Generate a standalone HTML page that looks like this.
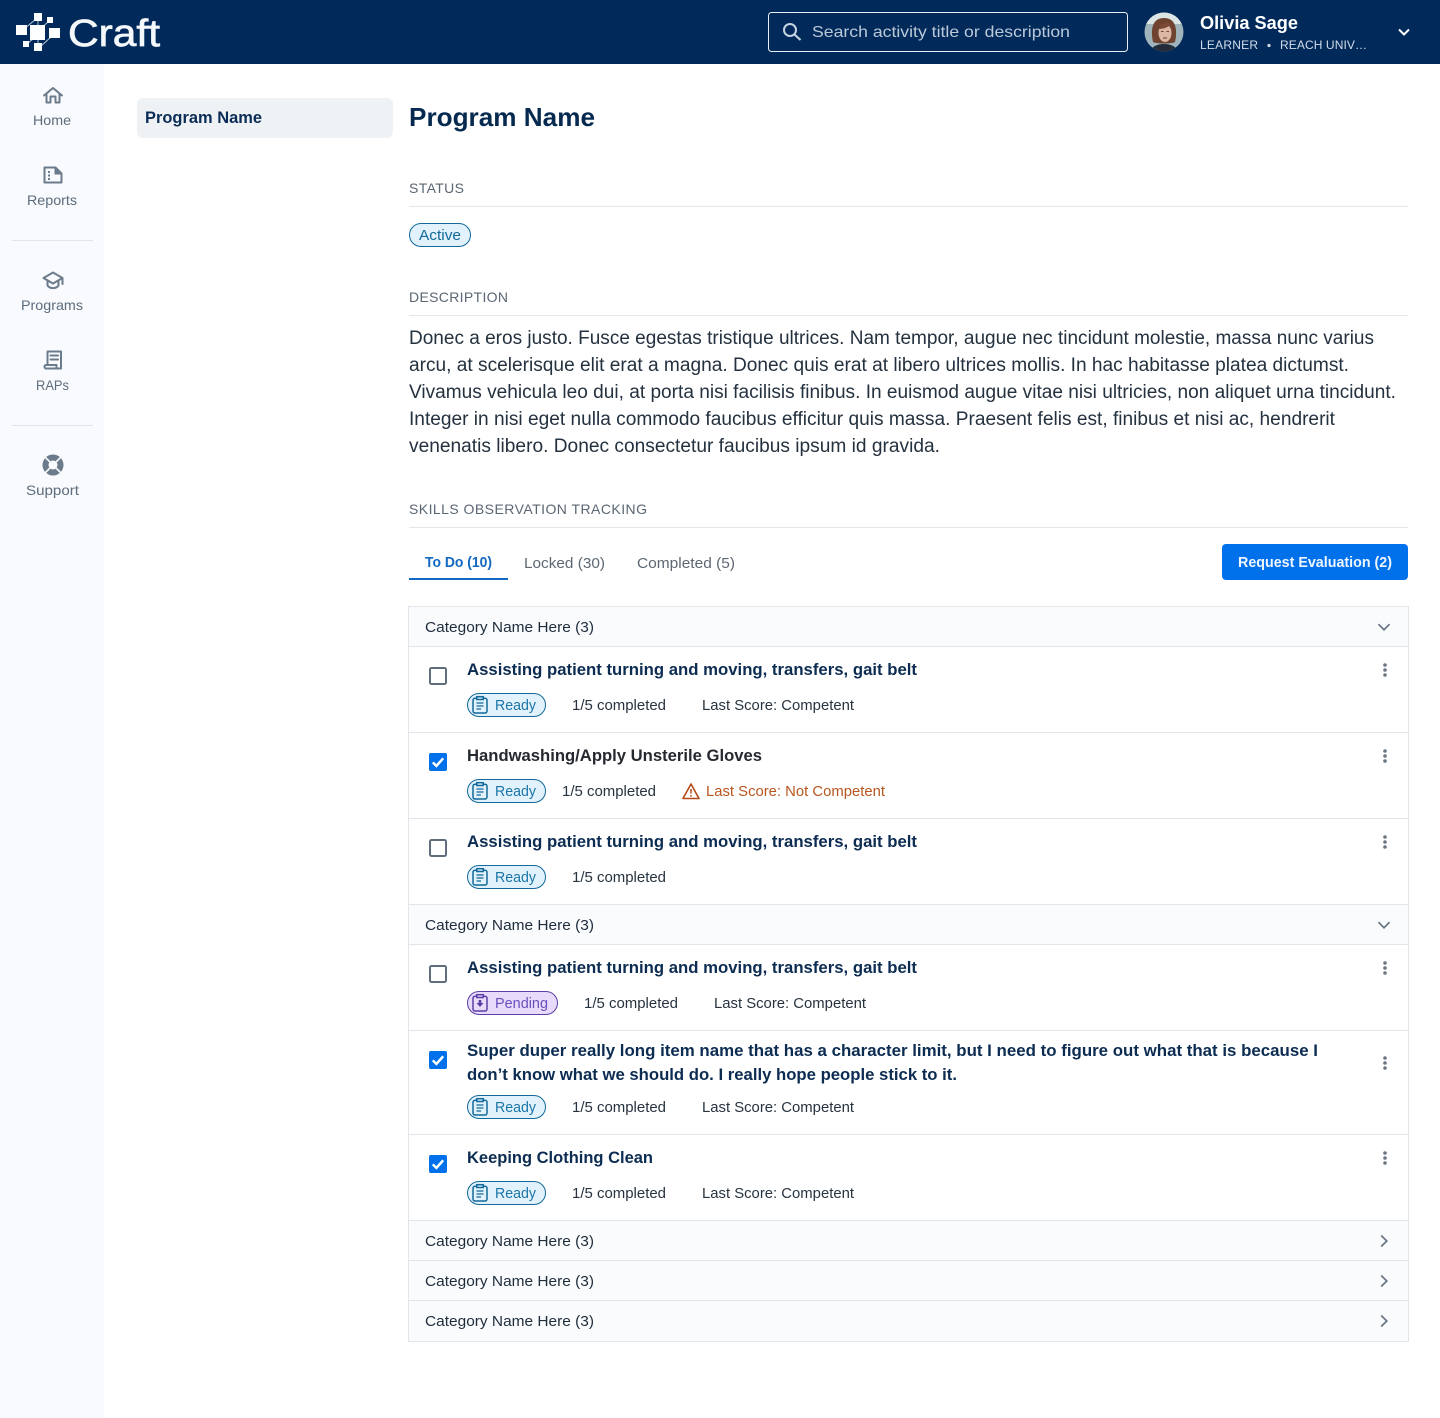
<!DOCTYPE html>
<html lang="en">
<head>
<meta charset="utf-8">
<title>Craft - Program Name</title>
<style>
html,body{margin:0;padding:0;background:#fff}
svg{display:block}
text{font-family:"Liberation Sans",sans-serif;white-space:pre}
.nav{font-size:14px;fill:#5d6c7d;text-anchor:start}
.lab{font-size:14px;fill:#5a6673}
.p{font-size:19px;fill:#24313f}
.t{font-size:16.5px;font-weight:700;fill:#0c2c52}
.c{font-size:15px;fill:#1e2c3c}
.s{font-size:15px;fill:#27333f}
.r{font-size:15px;fill:#1a75a8}
.i{fill:none;stroke:#6c7b8b;stroke-width:2;stroke-linejoin:round;stroke-linecap:round}
</style>
</head>
<body>
<svg xmlns="http://www.w3.org/2000/svg" width="1440" height="1418" viewBox="0 0 1440 1418">
<defs>
<clipPath id="av"><circle cx="1164" cy="32" r="19.5"/></clipPath>
<g id="ready">
<rect x=".5" y=".5" width="78" height="23" rx="11.5" fill="#e2f2fc" stroke="#12699a"/>
<g fill="none" stroke="#12699a" stroke-width="1.5">
<rect x="6" y="5.2" width="14" height="14.8" rx="2"/>
<rect x="9.8" y="3.7" width="6.4" height="2.8" fill="#e2f2fc"/>
<path d="M9.5 10h7M9.5 13h7M9.5 16h4.5" stroke-width="1.3"/>
</g>
</g>
<g id="pending">
<rect x=".5" y=".5" width="90" height="23" rx="11.5" fill="#e7dafa" stroke="#5b3fa6"/>
<g fill="none" stroke="#5b3fa6" stroke-width="1.5">
<rect x="6" y="5.2" width="14" height="14.8" rx="2"/>
<rect x="9.8" y="3.7" width="6.4" height="2.8" fill="#e7dafa"/>
</g>
<path d="M11.7 9h2.6v3h2.2l-3.5 4-3.5-4h2.2z" fill="#5b3fa6"/>
</g>
<g id="box"><rect x="1" y="1" width="16" height="16" rx="1.5" fill="#fff" stroke="#5f6d7d" stroke-width="2"/></g>
<g id="chk"><rect width="18" height="18" rx="2" fill="#0070eb"/><path d="M3.8 9.4l3.6 3.5 6.8-7.6" fill="none" stroke="#fff" stroke-width="2.5"/></g>
<g id="dots" fill="#6c7683"><circle cx="0" cy="-5" r="1.8"/><circle cx="0" cy="0" r="1.8"/><circle cx="0" cy="5" r="1.8"/></g>
<path id="cd" d="M-5.5 -2.8L0 2.8L5.5 -2.8" fill="none" stroke="#66727f" stroke-width="1.7"/>
<path id="cr" d="M-2.8 -5.5L2.8 0L-2.8 5.5" fill="none" stroke="#66727f" stroke-width="1.7"/>
</defs>

<!-- Header -->
<rect width="1440" height="64" fill="#012a5b"/>
<g stroke="#b8c8da" stroke-width="1" fill="none"><path d="M36 19L24 29M48 22L40 29M27 44L34 38M40 47L52 36M38 20V26M38 39V44"/></g>
<g fill="#fdfeff">
<rect x="30" y="25" width="15" height="15"/>
<rect x="16" y="25" width="11" height="10"/>
<rect x="49" y="28" width="11" height="10"/>
<rect x="34" y="13" width="8" height="8"/>
<rect x="47" y="17" width="6" height="6"/>
<rect x="23" y="41" width="6" height="6"/>
<rect x="34" y="43" width="8" height="8"/>
</g>
<text x="68" y="46" font-size="38" fill="#f4f8fb" stroke="#f4f8fb" stroke-width=".7" textLength="92" lengthAdjust="spacingAndGlyphs">Craft</text>

<rect x="768.5" y="12.5" width="359" height="39" rx="3" fill="#012a5b" stroke="#e8eef5"/>
<circle cx="790" cy="30" r="6" fill="none" stroke="#c6d2e0" stroke-width="2"/>
<path d="M794.5 34.5L800.5 40" stroke="#c6d2e0" stroke-width="2.2"/>
<text x="812" y="37" font-size="16" fill="#bcc9d9" textLength="258" lengthAdjust="spacingAndGlyphs">Search activity title or description</text>

<g clip-path="url(#av)">
<rect x="1144" y="12" width="40" height="40" fill="#9fb4bb"/>
<path d="M1144 12h40v12h-40z" fill="#dce5e5"/>
<path d="M1153 42c-3-14 0-24 11-24s14 10 11 24c-3 2-19 2-22 0z" fill="#6f4330"/>
<ellipse cx="1165" cy="33" rx="6.5" ry="9" fill="#dcb7a3"/>
<path d="M1158.5 29c1-5 6-7 12-5.5l-2 3c-4 2-7 2.500-10 2.500z" fill="#7b4a34"/>
<path d="M1161 31.500h2.500M1166.500 31.500h2.500M1163 38h4" stroke="#6b4436" stroke-width="1"/>
<path d="M1149 54c1-7 8-10 15-10s14 3 15 10z" fill="#232c38"/>
</g>

<text x="1200" y="29" font-size="18" font-weight="700" fill="#fff" textLength="98" lengthAdjust="spacingAndGlyphs">Olivia Sage</text>
<text x="1200" y="49" font-size="12" fill="#d3dde9" textLength="58" lengthAdjust="spacing">LEARNER</text>
<circle cx="1269" cy="45.5" r="1.6" fill="#d3dde9"/>
<text x="1280" y="49" font-size="12" fill="#d3dde9" textLength="87" lengthAdjust="spacing">REACH UNIV…</text>
<path d="M1399 29.5L1404 34.5L1409 29.5" fill="none" stroke="#fff" stroke-width="2"/>

<!-- Side navigation -->
<rect x="0" y="64" width="104" height="1354" fill="#f8fafd"/>
<path class="i" d="M44 95.5L53 88L62 95.5M46.5 94V102.5H50.5V96.5H55.5V102.5H59.5V94"/>
<text class="nav" x="33" y="125" textLength="38" lengthAdjust="spacingAndGlyphs">Home</text>
<path class="i" d="M44.500 167.500H55.500L61.500 173.500V182.500H44.500Z"/>
<path d="M55 167.500V174H61.500Z" fill="#6c7b8b" stroke="#6c7b8b" stroke-linejoin="round"/>
<path d="M49 171v2M49 174.500v2M49 178v2" stroke="#6c7b8b" stroke-width="2"/>
<text class="nav" x="27" y="205" textLength="50" lengthAdjust="spacingAndGlyphs">Reports</text>
<rect x="12" y="240" width="81" height="1" fill="#e1e5ea"/>
<path class="i" d="M43.5 278L53 272.5L62.5 278L53 283.5Z M47.5 281V285.5C50 289 56 289 58.5 285.5V281 M62.5 278V284"/>
<text class="nav" x="21" y="310" textLength="62" lengthAdjust="spacingAndGlyphs">Programs</text>
<path class="i" d="M47.5 365V351.500H61V368.500H46C44 368.500 44 365 46 365H56.5V368.500 M50.5 355.500H58M50.5 359.500H58"/>
<text class="nav" x="36" y="390" textLength="33" lengthAdjust="spacingAndGlyphs">RAPs</text>
<rect x="12" y="425" width="81" height="1" fill="#e1e5ea"/>
<circle cx="53" cy="465" r="10.500" fill="#6c7b8b"/>
<circle cx="53" cy="465" r="4.500" fill="#f8fafd"/>
<path d="M45.500 457.500L50 462M60.500 457.500L56 462M45.500 472.500L50 468M60.500 472.500L56 468" stroke="#f8fafd" stroke-width="1.600"/>
<text class="nav" x="26" y="495" textLength="53" lengthAdjust="spacingAndGlyphs">Support</text>

<!-- Left panel -->
<rect x="137" y="98" width="256" height="40" rx="6" fill="#eff2f5"/>
<text x="145" y="123" font-size="17" font-weight="700" fill="#0a2c55" textLength="117" lengthAdjust="spacingAndGlyphs">Program Name</text>

<!-- Main heading -->
<text x="409" y="126" font-size="26" font-weight="700" fill="#06294f" textLength="186" lengthAdjust="spacingAndGlyphs">Program Name</text>

<text class="lab" x="409" y="193" textLength="55" lengthAdjust="spacing">STATUS</text>
<rect x="409" y="206" width="999" height="1" fill="#e3e6ea"/>
<rect x="409.5" y="223.5" width="61" height="23" rx="11.5" fill="#e2f2fc" stroke="#12699a"/>
<text x="419" y="240" font-size="14.5" fill="#13699a" textLength="42" lengthAdjust="spacingAndGlyphs">Active</text>

<text class="lab" x="409" y="302" textLength="99" lengthAdjust="spacing">DESCRIPTION</text>
<rect x="409" y="315" width="999" height="1" fill="#e3e6ea"/>
<text class="p" x="409" y="344" textLength="965" lengthAdjust="spacingAndGlyphs">Donec a eros justo. Fusce egestas tristique ultrices. Nam tempor, augue nec tincidunt molestie, massa nunc varius</text>
<text class="p" x="409" y="371" textLength="940" lengthAdjust="spacingAndGlyphs">arcu, at scelerisque elit erat a magna. Donec quis erat at libero ultrices mollis. In hac habitasse platea dictumst.</text>
<text class="p" x="409" y="398" textLength="987" lengthAdjust="spacingAndGlyphs">Vivamus vehicula leo dui, at porta nisi facilisis finibus. In euismod augue vitae nisi ultricies, non aliquet urna tincidunt.</text>
<text class="p" x="409" y="425" textLength="926" lengthAdjust="spacingAndGlyphs">Integer in nisi eget nulla commodo faucibus efficitur quis massa. Praesent felis est, finibus et nisi ac, hendrerit</text>
<text class="p" x="409" y="452" textLength="531" lengthAdjust="spacingAndGlyphs">venenatis libero. Donec consectetur faucibus ipsum id gravida.</text>

<text class="lab" x="409" y="514" textLength="238" lengthAdjust="spacing">SKILLS OBSERVATION TRACKING</text>
<rect x="409" y="527" width="999" height="1" fill="#e3e6ea"/>

<!-- Tabs -->
<text x="425" y="567" font-size="14.5" font-weight="700" fill="#1268c2" textLength="67" lengthAdjust="spacingAndGlyphs">To Do (10)</text>
<rect x="409" y="578" width="99" height="2" fill="#1268c2"/>
<text x="524" y="568" font-size="15" fill="#5d6873" textLength="81" lengthAdjust="spacingAndGlyphs">Locked (30)</text>
<text x="637" y="568" font-size="15" fill="#5d6873" textLength="98" lengthAdjust="spacingAndGlyphs">Completed (5)</text>
<rect x="1222" y="544" width="186" height="36" rx="4" fill="#0070eb"/>
<text x="1238" y="567" font-size="14.5" font-weight="700" fill="#eef6fe" textLength="154" lengthAdjust="spacingAndGlyphs">Request Evaluation (2)</text>

<!-- Table -->
<g fill="#f9fbfd">
<rect x="409" y="607" width="999" height="39"/>
<rect x="409" y="905" width="999" height="39"/>
<rect x="409" y="1221" width="999" height="120"/>
</g>
<rect x="408.5" y="606.5" width="1000" height="735" fill="none" stroke="#e2e5e9"/>
<g fill="#e2e5e9">
<rect x="409" y="646" width="999" height="1"/>
<rect x="409" y="732" width="999" height="1"/>
<rect x="409" y="818" width="999" height="1"/>
<rect x="409" y="904" width="999" height="1"/>
<rect x="409" y="944" width="999" height="1"/>
<rect x="409" y="1030" width="999" height="1"/>
<rect x="409" y="1134" width="999" height="1"/>
<rect x="409" y="1220" width="999" height="1"/>
<rect x="409" y="1260" width="999" height="1"/>
<rect x="409" y="1300" width="999" height="1"/>
</g>

<text class="c" x="425" y="632" textLength="169" lengthAdjust="spacingAndGlyphs">Category Name Here (3)</text>
<use href="#cd" x="1384" y="627"/>
<text class="c" x="425" y="930" textLength="169" lengthAdjust="spacingAndGlyphs">Category Name Here (3)</text>
<use href="#cd" x="1384" y="925"/>
<text class="c" x="425" y="1246" textLength="169" lengthAdjust="spacingAndGlyphs">Category Name Here (3)</text>
<use href="#cr" x="1384" y="1241"/>
<text class="c" x="425" y="1286" textLength="169" lengthAdjust="spacingAndGlyphs">Category Name Here (3)</text>
<use href="#cr" x="1384" y="1281"/>
<text class="c" x="425" y="1326" textLength="169" lengthAdjust="spacingAndGlyphs">Category Name Here (3)</text>
<use href="#cr" x="1384" y="1321"/>

<!-- Row 1 -->
<use href="#box" x="429" y="667"/>
<text class="t" x="467" y="675" textLength="450" lengthAdjust="spacingAndGlyphs">Assisting patient turning and moving, transfers, gait belt</text>
<use href="#ready" x="467" y="693"/>
<text class="r" x="495" y="710" textLength="41" lengthAdjust="spacingAndGlyphs">Ready</text>
<text class="s" x="572" y="710" textLength="94" lengthAdjust="spacingAndGlyphs">1/5 completed</text>
<text class="s" x="702" y="710" textLength="152" lengthAdjust="spacingAndGlyphs">Last Score: Competent</text>
<use href="#dots" x="1385" y="670"/>

<!-- Row 2 -->
<use href="#chk" x="429" y="753"/>
<text class="t" x="467" y="761" style="fill:#24292f" textLength="295" lengthAdjust="spacingAndGlyphs">Handwashing/Apply Unsterile Gloves</text>
<use href="#ready" x="467" y="779"/>
<text class="r" x="495" y="796" textLength="41" lengthAdjust="spacingAndGlyphs">Ready</text>
<text class="s" x="562" y="796" textLength="94" lengthAdjust="spacingAndGlyphs">1/5 completed</text>
<path d="M691 784L699 798.5H683Z" fill="none" stroke="#b54a17" stroke-width="1.6" stroke-linejoin="round"/>
<path d="M691 789v4.5M691 795v1.6" stroke="#b54a17" stroke-width="1.5"/>
<text class="s" x="706" y="796" style="fill:#b8561f" textLength="179" lengthAdjust="spacingAndGlyphs">Last Score: Not Competent</text>
<use href="#dots" x="1385" y="756"/>

<!-- Row 3 -->
<use href="#box" x="429" y="839"/>
<text class="t" x="467" y="847" textLength="450" lengthAdjust="spacingAndGlyphs">Assisting patient turning and moving, transfers, gait belt</text>
<use href="#ready" x="467" y="865"/>
<text class="r" x="495" y="882" textLength="41" lengthAdjust="spacingAndGlyphs">Ready</text>
<text class="s" x="572" y="882" textLength="94" lengthAdjust="spacingAndGlyphs">1/5 completed</text>
<use href="#dots" x="1385" y="842"/>

<!-- Row 4 -->
<use href="#box" x="429" y="965"/>
<text class="t" x="467" y="973" textLength="450" lengthAdjust="spacingAndGlyphs">Assisting patient turning and moving, transfers, gait belt</text>
<use href="#pending" x="467" y="991"/>
<text x="495" y="1008" font-size="15" fill="#6a4fbd" textLength="53" lengthAdjust="spacingAndGlyphs">Pending</text>
<text class="s" x="584" y="1008" textLength="94" lengthAdjust="spacingAndGlyphs">1/5 completed</text>
<text class="s" x="714" y="1008" textLength="152" lengthAdjust="spacingAndGlyphs">Last Score: Competent</text>
<use href="#dots" x="1385" y="968"/>

<!-- Row 5 -->
<use href="#chk" x="429" y="1051"/>
<text class="t" x="467" y="1056" textLength="851" lengthAdjust="spacingAndGlyphs">Super duper really long item name that has a character limit, but I need to figure out what that is because I</text>
<text class="t" x="467" y="1080" textLength="490" lengthAdjust="spacingAndGlyphs">don’t know what we should do. I really hope people stick to it.</text>
<use href="#ready" x="467" y="1095"/>
<text class="r" x="495" y="1112" textLength="41" lengthAdjust="spacingAndGlyphs">Ready</text>
<text class="s" x="572" y="1112" textLength="94" lengthAdjust="spacingAndGlyphs">1/5 completed</text>
<text class="s" x="702" y="1112" textLength="152" lengthAdjust="spacingAndGlyphs">Last Score: Competent</text>
<use href="#dots" x="1385" y="1063"/>

<!-- Row 6 -->
<use href="#chk" x="429" y="1155"/>
<text class="t" x="467" y="1163" textLength="186" lengthAdjust="spacingAndGlyphs">Keeping Clothing Clean</text>
<use href="#ready" x="467" y="1181"/>
<text class="r" x="495" y="1198" textLength="41" lengthAdjust="spacingAndGlyphs">Ready</text>
<text class="s" x="572" y="1198" textLength="94" lengthAdjust="spacingAndGlyphs">1/5 completed</text>
<text class="s" x="702" y="1198" textLength="152" lengthAdjust="spacingAndGlyphs">Last Score: Competent</text>
<use href="#dots" x="1385" y="1158"/>
</svg>
</body>
</html>
